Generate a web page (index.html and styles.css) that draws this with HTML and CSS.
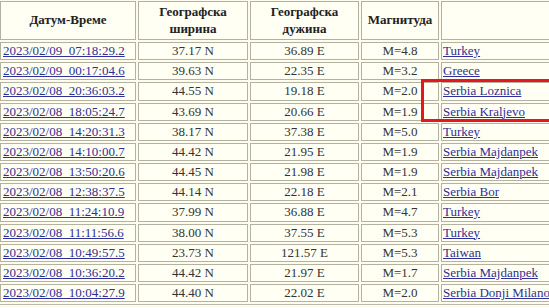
FILE: index.html
```html
<!DOCTYPE html>
<html>
<head>
<meta charset="utf-8">
<link rel="stylesheet" href="styles.css">
</head>
<body>
<div class="page">
<table class="quakes">
<thead>
<tr>
<th class="c1">Датум-Време</th>
<th class="c2">Географска<br>ширина</th>
<th class="c3">Географска<br>дужина</th>
<th class="c4">Магнитуда</th>
<th class="c5"></th>
</tr>
</thead>
<tbody>
<tr><td class="date"><a href="#">2023/02/09_07:18:29.2</a></td><td class="num">37.17 N</td><td class="num">36.89 E</td><td class="num">M=4.8</td><td class="place"><a href="#">Turkey</a></td></tr>
<tr><td class="date"><a href="#">2023/02/09_00:17:04.6</a></td><td class="num">39.63 N</td><td class="num">22.35 E</td><td class="num">M=3.2</td><td class="place"><a href="#">Greece</a></td></tr>
<tr><td class="date"><a href="#">2023/02/08_20:36:03.2</a></td><td class="num">44.55 N</td><td class="num">19.18 E</td><td class="num">M=2.0</td><td class="place"><a href="#">Serbia Loznica</a></td></tr>
<tr><td class="date"><a href="#">2023/02/08_18:05:24.7</a></td><td class="num">43.69 N</td><td class="num">20.66 E</td><td class="num">M=1.9</td><td class="place"><a href="#">Serbia Kraljevo</a></td></tr>
<tr><td class="date"><a href="#">2023/02/08_14:20:31.3</a></td><td class="num">38.17 N</td><td class="num">37.38 E</td><td class="num">M=5.0</td><td class="place"><a href="#">Turkey</a></td></tr>
<tr><td class="date"><a href="#">2023/02/08_14:10:00.7</a></td><td class="num">44.42 N</td><td class="num">21.95 E</td><td class="num">M=1.9</td><td class="place"><a href="#">Serbia Majdanpek</a></td></tr>
<tr><td class="date"><a href="#">2023/02/08_13:50:20.6</a></td><td class="num">44.45 N</td><td class="num">21.98 E</td><td class="num">M=1.9</td><td class="place"><a href="#">Serbia Majdanpek</a></td></tr>
<tr><td class="date"><a href="#">2023/02/08_12:38:37.5</a></td><td class="num">44.14 N</td><td class="num">22.18 E</td><td class="num">M=2.1</td><td class="place"><a href="#">Serbia Bor</a></td></tr>
<tr><td class="date"><a href="#">2023/02/08_11:24:10.9</a></td><td class="num">37.99 N</td><td class="num">36.88 E</td><td class="num">M=4.7</td><td class="place"><a href="#">Turkey</a></td></tr>
<tr><td class="date"><a href="#">2023/02/08_11:11:56.6</a></td><td class="num">38.00 N</td><td class="num">37.55 E</td><td class="num">M=5.3</td><td class="place"><a href="#">Turkey</a></td></tr>
<tr><td class="date"><a href="#">2023/02/08_10:49:57.5</a></td><td class="num">23.73 N</td><td class="num">121.57 E</td><td class="num">M=5.3</td><td class="place"><a href="#">Taiwan</a></td></tr>
<tr><td class="date"><a href="#">2023/02/08_10:36:20.2</a></td><td class="num">44.42 N</td><td class="num">21.97 E</td><td class="num">M=1.7</td><td class="place"><a href="#">Serbia Majdanpek</a></td></tr>
<tr><td class="date"><a href="#">2023/02/08_10:04:27.9</a></td><td class="num">44.40 N</td><td class="num">22.02 E</td><td class="num">M=2.0</td><td class="place"><a href="#">Serbia Donji Milanovac</a></td></tr>
</tbody>
</table>
<div class="highlight"></div>
</div>
</body>
</html>
```

FILE: styles.css
```css
html, body {
  margin: 0;
  padding: 0;
  overflow: hidden;
  background: #fdfcee;
}
.page {
  position: relative;
  width: 549px;
  height: 308px;
  overflow: hidden;
  font-family: "Liberation Serif", "Times New Roman", serif;
  color: #2a2a2a;
}
.quakes {
  table-layout: fixed;
  width: 587px;
  margin: -2px 0 0 -3px;
  border: 1px solid #bbbaa8;
  border-spacing: 2px;
  background: #fdfcee;
}
.quakes th,
.quakes td {
  box-sizing: border-box;
  border: 1px solid #b3b2a0;
  background: #fffff3;
}
.quakes th {
  font-size: 13px;
  font-weight: bold;
  line-height: 16.5px;
  padding: 2px 1px;
  text-align: center;
  color: #222;
}
.c1 { width: 136px; }
.c2 { width: 110px; }
.c3 { width: 109px; }
.c4 { width: 78px; }
.c5 { width: 140px; }
.quakes td {
  font-size: 13px;
  line-height: 16.17px;
  padding: 0 1px;
  white-space: nowrap;
  overflow: hidden;
}
.quakes td.date {
  padding-left: 2px;
}
.quakes td.num {
  text-align: center;
  color: #333;
}
.quakes td.place {
  padding-left: 1px;
}
.quakes a {
  color: #2f2f98;
  text-decoration: underline;
}
.highlight {
  position: absolute;
  left: 421px;
  top: 79px;
  width: 150px;
  height: 43px;
  box-sizing: border-box;
  border: 3px solid #e8141e;
}
```
